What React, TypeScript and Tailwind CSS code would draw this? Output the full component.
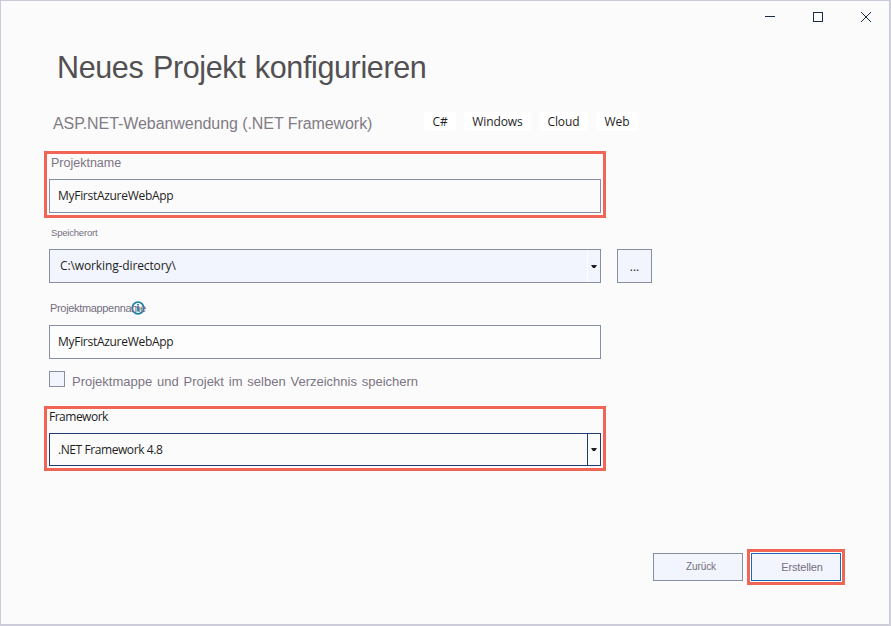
import React from "react";

const sans = "font-['Liberation_Sans',Arial,sans-serif]";
const ui = "font-['Open_Sans','Noto_Sans',sans-serif]";

function Caret() {
  return (
    <svg width="6" height="3" viewBox="0 0 6 3" fill="#1e1e1e" className="block">
      <path d="M0 0H6L4 3H2Z" />
    </svg>
  );
}

function WindowControls() {
  return (
    <div className="flex h-[31px] items-center justify-end gap-[36px] pr-[17px]">
      <svg width="12" height="12" viewBox="0 0 12 12" stroke="#1b2a47" fill="none">
        <path d="M1 5.5H11" />
      </svg>
      <svg width="12" height="12" viewBox="0 0 12 12" stroke="#1b2a47" fill="none">
        <rect x="1.5" y="1.5" width="9" height="9" />
      </svg>
      <svg width="12" height="12" viewBox="0 0 12 12" stroke="#1b2a47" fill="none">
        <path d="M1 1L11 11M11 1L1 11" />
      </svg>
    </div>
  );
}

function Tag({ label, width }: { label: string; width: string }) {
  return (
    <span className={`flex h-[19px] items-center justify-center rounded-[3px] bg-white text-[12px] leading-[19px] tracking-[-0.1px] text-[#1e1e1e] ${ui} ${width}`}>
      {label}
    </span>
  );
}

export default function App() {
  return (
    <div className="h-[626px] w-[891px] overflow-hidden bg-[#d0d0d8] pr-px pb-px">
      <div className="flex h-[625px] w-[890px] flex-col border border-[#c9cadc] bg-[#fbfbfb]">
        <WindowControls />

        <h1 className={`mt-[15px] ml-[56px] h-[41px] text-[30.5px] leading-[40px] font-normal tracking-[-0.37px] [word-spacing:1.5px] whitespace-nowrap text-[#525052] ${sans}`}>
          Neues Projekt konfigurieren
        </h1>

        <div className="mt-[24px] flex h-[20px] items-start">
          <h2 className={`ml-[52px] w-[371px] text-[16px] leading-[24px] font-normal tracking-[-0.07px] whitespace-nowrap text-[#827b86] ${sans}`}>
            ASP.NET-Webanwendung (.NET Framework)
          </h2>
          <div className="flex gap-[8px]">
            <Tag label="C#" width="w-[32px]" />
            <Tag label="Windows" width="w-[67px]" />
            <Tag label="Cloud" width="w-[49px]" />
            <Tag label="Web" width="w-[42px]" />
          </div>
        </div>

        <section className="mt-[19px] ml-[43px] flex h-[67px] w-[562px] flex-col border-[3px] border-[#f06555] pl-[2px]">
          <label className={`h-[25px] pl-[2px] text-[12.5px] leading-[18px] text-[#7b7484] ${sans}`}>Projektname</label>
          <div className={`flex h-[34px] w-[552px] items-center border border-[#8590a6] pl-[8px] text-[12px] tracking-[-0.29px] text-[#1e1e1e] ${ui}`}>
            MyFirstAzureWebApp
          </div>
        </section>

        <section className="mt-[6px] ml-[48px] flex flex-col">
          <label className={`h-[25px] pl-[2px] text-[9.5px] leading-[18px] tracking-[-0.2px] text-[#756e7f] ${sans}`}>Speicherort</label>
          <div className="flex gap-[16px]">
            <div className={`flex h-[34px] w-[552px] border border-[#8590a6] bg-[#f2f5fd] text-[12px] tracking-[-0.12px] text-[#1e1e1e] ${ui}`}>
              <span className="flex flex-1 items-center pl-[10px]">C:\working-directory\</span>
              <span className="flex w-[13px] items-center border-l border-white pl-[3px]"><Caret /></span>
            </div>
            <button className={`flex h-[34px] w-[35px] items-center justify-center border border-[#8590a6] bg-[#f2f5fd] pt-[2px] text-[12px] text-[#1e1e1e] ${ui}`}>...</button>
          </div>
        </section>

        <section className="mt-[16px] ml-[48px] flex flex-col">
          <label className={`relative h-[26px] pl-px text-[11px] leading-[18px] tracking-[-0.33px] text-[#756e7f] ${sans}`}>
            <svg className="absolute top-[2px] left-[82px]" width="14" height="14" viewBox="0 0 14 14" fill="none" stroke="#1f83a8">
              <circle cx="7" cy="7" r="5.8" strokeWidth="1.8" />
              <path d="M7 3V4.5M7 5.5V10.5" strokeWidth="1.8" />
            </svg>
            <span className="relative">Projektmappenname</span>
          </label>
          <div className={`flex h-[34px] w-[552px] items-center border border-[#8590a6] bg-[#fdfdfd] pl-[8px] text-[12px] tracking-[-0.29px] text-[#1e1e1e] ${ui}`}>
            MyFirstAzureWebApp
          </div>
        </section>

        <div className="mt-[12px] ml-[48px] flex h-[16px]">
          <span className="h-[16px] w-[16px] border border-[#8590a6] bg-[#f2f5fd]" />
          <span className={`ml-[7px] text-[13px] leading-[21px] [word-spacing:1.2px] whitespace-nowrap text-[#7b7484] ${sans}`}>
            Projektmappe und Projekt im selben Verzeichnis speichern
          </span>
        </div>

        <section className="mt-[19px] ml-[43px] flex h-[65px] w-[562px] flex-col border-[3px] border-[#f06555] pl-[2px]">
          <label className={`h-[24px] text-[12px] leading-[16px] tracking-[-0.5px] text-[#1e1e1e] ${ui}`}>Framework</label>
          <div className={`flex h-[33px] w-[552px] border border-[#213a70] text-[12px] tracking-[-0.42px] text-[#1e1e1e] ${ui}`}>
            <span className="flex flex-1 items-center pl-[8px]">.NET Framework 4.8</span>
            <span className="flex w-[13px] items-center border-l border-[#213a70] pl-[3px]"><Caret /></span>
          </div>
        </section>

        <footer className="mt-[78px] ml-[652px] flex items-center gap-[4px]">
          <button className={`h-[28px] w-[90px] border border-[#8590a6] bg-[#f2f5fd] pl-[6px] text-[10px] leading-[24px] tracking-[-0.1px] text-[#756e7f] ${sans}`}>Zurück</button>
          <div className="border-[3px] border-[#f06555] bg-white p-px">
            <button className={`block h-[28px] w-[90px] border border-[#1769b5] bg-[#f2f5fd] pl-[12px] text-[11px] leading-[24px] tracking-[-0.15px] text-[#756e7f] ${sans}`}>Erstellen</button>
          </div>
        </footer>
      </div>
    </div>
  );
}
